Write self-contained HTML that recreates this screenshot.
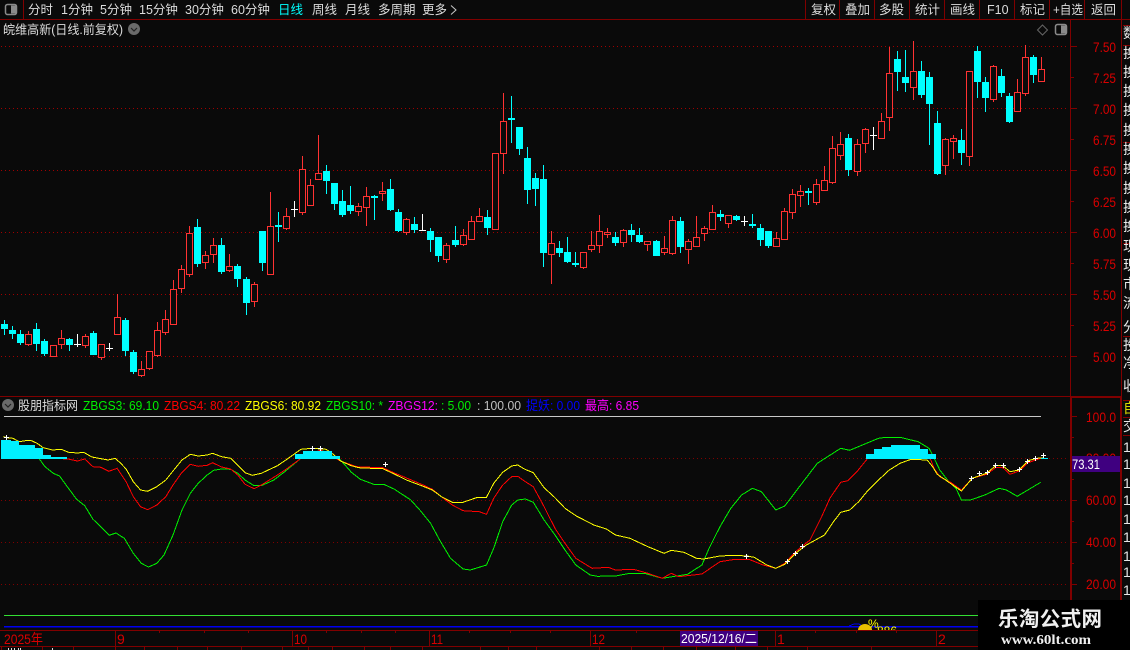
<!DOCTYPE html>
<html lang="zh"><head><meta charset="utf-8"><title>K线</title>
<style>
html,body{margin:0;padding:0;background:#0a0a0a;width:1130px;height:650px;overflow:hidden}
svg{display:block}
text{font-family:"Liberation Sans","WenQuanYi Zen Hei","Noto Sans CJK SC",sans-serif}
.t{font-size:12.5px;fill:#dcdcdc}
.ax{font-size:14px;fill:#d80000}
.ix{font-size:13px}
</style></head><body>
<svg id="s" width="1130" height="650" viewBox="0 0 1130 650" xmlns="http://www.w3.org/2000/svg">
<rect width="1130" height="650" fill="#0a0a0a"/>
<g id="grid" shape-rendering="crispEdges"></g>
<g id="candles" shape-rendering="crispEdges"></g>
<g id="ind"></g>

<!-- toolbar -->
<g shape-rendering="crispEdges" stroke="#800000" stroke-width="1">
<path d="M0 19.5H1130M23.5 0V19M805.5 0V19M839.5 0V19M874.5 0V19M909.5 0V19M944.5 0V19M979.5 0V19M1014.5 0V19M1049.5 0V19M1084.5 0V19M1121.5 0V19"/>
</g>
<rect x="5.5" y="4.5" width="11" height="10" rx="2" fill="none" stroke="#8a8a8a" stroke-width="1.5"/><rect x="11" y="5.5" width="5" height="8" fill="#8a8a8a"/>
<g class="t">
<text class="t" x="28" y="14">分时</text>
<text class="t" x="61" y="14">1分钟</text>
<text class="t" x="100" y="14">5分钟</text>
<text class="t" x="139" y="14">15分钟</text>
<text class="t" x="185" y="14">30分钟</text>
<text class="t" x="231" y="14">60分钟</text>
<text class="t" x="278" y="14" style="fill:#00ffff">日线</text>
<text class="t" x="312" y="14">周线</text>
<text class="t" x="345" y="14">月线</text>
<text class="t" x="378" y="14">多周期</text>
<text class="t" x="422" y="14">更多</text>
<path d="M451 5.5l5 4.5l-5 4.5" fill="none" stroke="#c8c8c8"/>
<text class="t" x="811" y="14">复权</text>
<text class="t" x="845" y="14">叠加</text>
<text class="t" x="879" y="14">多股</text>
<text class="t" x="915" y="14">统计</text>
<text class="t" x="950" y="14">画线</text>
<text class="t" x="987" y="14">F10</text>
<text class="t" x="1020" y="14">标记</text>
<text class="t" x="1053" y="14" textLength="30" lengthAdjust="spacingAndGlyphs">+自选</text>
<text class="t" x="1091" y="14">返回</text>
</g>

<!-- title row -->
<text class="t" x="3" y="34" textLength="120" lengthAdjust="spacingAndGlyphs">皖维高新(日线.前复权)</text>
<circle cx="134" cy="29" r="6" fill="#6a6a6a"/><path d="M131 28l3 3l3-3" fill="none" stroke="#222" stroke-width="1.2"/>
<path d="M1042.5 25l5 5l-5 5l-5-5z" fill="none" stroke="#666"/>
<rect x="1055.5" y="24.5" width="11" height="10" rx="2" fill="none" stroke="#8a8a8a" stroke-width="1.5"/><rect x="1061" y="25.5" width="5" height="8" fill="#8a8a8a"/>

<!-- axes -->
<g id="axes" shape-rendering="crispEdges"></g>
<g id="labels"></g>
<rect x="1072" y="456" width="48" height="16" fill="#3f0080"/>
<text x="1072" y="469" font-size="14" fill="#fff" textLength="28" lengthAdjust="spacingAndGlyphs">73.31</text>

<!-- indicator title -->
<circle cx="8" cy="405" r="6" fill="#6a6a6a"/><path d="M5 404l3 3l3-3" fill="none" stroke="#222" stroke-width="1.2"/>
<text x="18" y="410" font-size="12.5" fill="#dcdcdc" textLength="60" lengthAdjust="spacingAndGlyphs">股朋指标网</text>
<g class="ix">
<text class="ix" x="83" y="410" fill="#00f000" textLength="76" lengthAdjust="spacingAndGlyphs">ZBGS3: 69.10</text>
<text class="ix" x="164" y="410" fill="#ff0000" textLength="76" lengthAdjust="spacingAndGlyphs">ZBGS4: 80.22</text>
<text class="ix" x="245" y="410" fill="#ffff00" textLength="76" lengthAdjust="spacingAndGlyphs">ZBGS6: 80.92</text>
<text class="ix" x="326" y="410" fill="#00f000" textLength="57" lengthAdjust="spacingAndGlyphs">ZBGS10: *</text>
<text class="ix" x="388" y="410" fill="#ff00ff" textLength="50" lengthAdjust="spacingAndGlyphs">ZBGS12:</text>
<text class="ix" x="441" y="410" fill="#00f000" textLength="30" lengthAdjust="spacingAndGlyphs">: 5.00</text>
<text class="ix" x="477" y="410" fill="#c0c0c0" textLength="44" lengthAdjust="spacingAndGlyphs">: 100.00</text>
<text class="ix" x="526" y="410" fill="#0000ff" textLength="54" lengthAdjust="spacingAndGlyphs">捉妖: 0.00</text>
<text class="ix" x="585" y="410" fill="#ff00ff" textLength="54" lengthAdjust="spacingAndGlyphs">最高: 6.85</text>
</g>

<!-- lower band -->
<g shape-rendering="crispEdges">
<rect x="4" y="615" width="1126" height="1" fill="#33e033"/>
<rect x="4" y="626" width="1126" height="1.5" fill="#0000f0"/>
<path d="M849 626l5-2h5l3 2" fill="none" stroke="#0000f0"/>
</g>
<path d="M858 630a7 6 0 0 1 14 0z" fill="#e8c000"/>
<text x="868" y="628" font-size="12" fill="#ffff00">%</text>
<text x="877" y="635" font-size="12" fill="#ffff00">886</text>
<rect x="0" y="630" width="1130" height="16" fill="#0a0a0a"/>

<!-- time axis -->
<g id="time" shape-rendering="crispEdges"></g>
<g font-size="14" fill="#d80000">
<text x="4" y="644" textLength="39" lengthAdjust="spacingAndGlyphs">2025年</text>
<text x="117" y="644">9</text>
<text x="294" y="644" textLength="13" lengthAdjust="spacingAndGlyphs">10</text>
<text x="431" y="644" textLength="12" lengthAdjust="spacingAndGlyphs">11</text>
<text x="592" y="644" textLength="13" lengthAdjust="spacingAndGlyphs">12</text>
<text x="777" y="644">1</text>
<text x="938" y="644">2</text>
</g>
<rect x="680" y="631" width="78" height="15" fill="#3f0080"/>
<text x="681" y="643" font-size="13" fill="#fff" textLength="76" lengthAdjust="spacingAndGlyphs">2025/12/16/二</text>

<!-- right column clipped labels -->
<svg x="1123" y="20" width="7" height="630" viewBox="1123 20 7 630">
<g font-size="14" fill="#e8e8e8" id="rc"></g>
</svg>

<!-- logo -->
<rect x="978" y="600" width="152" height="50" fill="#000"/>
<text x="998" y="626" font-size="20.5" font-weight="700" fill="#f0f0f0" textLength="104" lengthAdjust="spacing">乐淘公式网</text>
<text x="1001" y="644" font-size="14" font-weight="700" fill="#f0f0f0" style="font-family:'Liberation Serif',serif" textLength="90" lengthAdjust="spacingAndGlyphs">www.60lt.com</text>
</svg>
<script>
var NS="http://www.w3.org/2000/svg";
function el(p,n,a){var e=document.createElementNS(NS,n);for(var k in a)e.setAttribute(k,a[k]);document.getElementById(p).appendChild(e);return e}
function tx(p,x,y,s,a){var e=el(p,"text",Object.assign({x:x,y:y},a||{}));e.textContent=s;return e}

/* grid */
[46,108,170,232,294,356].forEach(function(y){el("grid","path",{d:"M1 "+(y+.5)+"H1069",stroke:"#a00000","stroke-dasharray":"1 3",fill:"none"})});
[458,500,542,584].forEach(function(y){el("grid","path",{d:"M1 "+(y+.5)+"H1069",stroke:"#800000","stroke-dasharray":"1 3",fill:"none"})});
el("grid","rect",{x:4,y:416,width:1037,height:1,fill:"#c8c8c8"});

/* candles: wickTop, bodyTop, bodyBottom, wickBottom, type */
var C=[[320,324,329,335,'c'],[326,330,334,339,'c'],[330,334,343,345,'c'],[331,334,344,346,'r'],[323,329,344,351,'c'],[339,341,354,356,'c'],[345,345,356,357,'r'],[330,338,344,349,'r'],[338,339,345,351,'c'],[334,344,344,347,'w'],[334,336,345,348,'r'],[331,333,355,355,'c'],[344,344,357,360,'r'],[343,348,348,351,'w'],[294,317,334,334,'r'],[318,320,351,356,'c'],[350,352,372,374,'c'],[361,369,375,377,'r'],[351,351,368,370,'r'],[322,330,355,357,'r'],[310,319,332,335,'r'],[280,289,324,324,'r'],[265,269,288,293,'r'],[226,233,274,277,'r'],[219,227,264,267,'c'],[251,255,262,269,'r'],[238,245,254,263,'r'],[238,245,272,274,'c'],[254,266,270,272,'r'],[264,266,279,287,'c'],[277,279,303,315,'c'],[282,284,301,307,'r'],[231,231,263,271,'c'],[192,226,274,274,'r'],[212,225,227,242,'c'],[208,216,228,230,'r'],[201,209,209,217,'w'],[156,169,212,215,'r'],[179,185,205,206,'r'],[135,173,179,179,'r'],[165,171,181,194,'c'],[183,183,204,210,'c'],[190,201,215,217,'c'],[186,205,211,214,'c'],[203,206,211,216,'r'],[187,196,207,226,'r'],[195,196,197,220,'c'],[182,191,193,201,'r'],[179,189,210,211,'c'],[209,212,231,232,'c'],[218,219,232,235,'r'],[217,224,230,233,'c'],[214,230,230,231,'w'],[228,231,240,252,'c'],[237,237,256,262,'c'],[243,245,259,263,'r'],[226,240,245,247,'c'],[229,235,244,246,'r'],[216,221,239,239,'r'],[208,216,221,221,'r'],[210,217,228,235,'c'],[153,153,229,230,'r'],[93,121,153,174,'r'],[96,118,118,143,'c'],[127,127,149,155,'c'],[147,158,190,204,'c'],[173,178,189,206,'c'],[165,179,253,267,'c'],[231,243,254,284,'r'],[241,248,253,257,'c'],
[237,252,262,263,'c'],[252,263,264,267,'c'],[252,252,267,269,'r'],[231,245,249,252,'r'],[215,231,245,253,'r'],[228,232,234,238,'r'],[232,237,243,246,'c'],[229,230,242,247,'r'],[224,230,235,242,'c'],[228,235,242,243,'c'],[241,241,244,251,'r'],[240,241,256,256,'c'],[236,248,252,255,'r'],[216,220,253,255,'r'],[217,221,247,253,'c'],[239,241,249,264,'r'],[216,237,246,247,'r'],[226,228,233,241,'r'],[205,212,229,229,'r'],[210,214,217,221,'c'],[215,215,223,228,'r'],[215,216,220,221,'c'],[216,221,221,226,'w'],[214,224,226,228,'c'],[224,228,240,246,'c'],[231,231,246,248,'c'],[232,238,246,247,'r'],[208,211,239,239,'r'],[189,194,212,219,'r'],[185,191,195,207,'r'],[188,191,193,205,'c'],[179,184,202,205,'r'],[166,180,190,190,'r'],[136,148,182,184,'r'],[132,144,155,160,'r'],[134,138,170,176,'c'],[139,144,171,176,'r'],[128,129,143,153,'r'],[127,135,135,150,'w'],[113,121,138,138,'r'],[47,73,117,131,'r'],[51,59,72,91,'c'],[50,77,83,92,'c'],[41,71,87,100,'r'],[61,71,95,98,'c'],[72,77,104,145,'c'],[111,123,174,175,'c'],[138,139,165,175,'r'],[135,138,141,159,'r'],[129,140,153,165,'c'],[71,71,156,166,'r'],[46,51,82,98,'c'],[77,82,98,112,'c'],[65,66,99,102,'r'],[69,76,93,97,'c'],[93,96,122,123,'c'],[79,92,111,111,'r'],[45,57,93,96,'r'],[55,57,75,83,'c'],[57,69,81,82,'r']];
C.forEach(function(c,i){
  var x=Math.round(4.3+8.04*i),col=c[4]=='r'?'#ff3232':c[4]=='c'?'#00ffff':'#ffffff',xm=x+.5;
  if(c[4]=='r'){
    el("candles","path",{d:"M"+xm+" "+c[0]+"V"+c[1]+"M"+xm+" "+c[2]+"V"+c[3],stroke:col,fill:"none"});
    el("candles","rect",{x:x-3+.5,y:c[1]+.5,width:6,height:Math.max(c[2]-c[1],2),fill:"#0a0a0a",stroke:col});
  }else{
    el("candles","path",{d:"M"+xm+" "+c[0]+"V"+c[3],stroke:col,fill:"none"});
    if(c[4]=='w'||c[2]-c[1]<2){el("candles","rect",{x:x-3,y:c[1],width:7,height:c[4]=='w'?1:Math.max(c[2]-c[1],2),fill:col})}
    else el("candles","rect",{x:x-3,y:c[1],width:7,height:c[2]-c[1],fill:col});
  }
});

/* indicator lines */
function P(a,b){var s=[];a.forEach(function(p){s.push((p[0]/2.775).toFixed(1)+","+(395+p[1]/3).toFixed(1))});b.forEach(function(p){s.push((565+p[0]/2.775).toFixed(1)+","+(395+p[1]/3).toFixed(1))});return s.join(" ")}
var G=P([[108,190],[125,215],[148,235],[165,243],[190,280],[212,312],[235,332],[258,373],[280,395],[303,421],[322,414],[345,430],[370,475],[392,505],[412,516],[435,505],[455,480],[480,420],[505,345],[528,295],[550,265],[575,240],[593,226],[615,222],[640,223],[660,235],[680,255],[705,272],[725,272],[760,255],[790,230],[835,190],[890,165],[945,195],[975,232],[1000,253],[1037,268],[1065,268],[1095,283],[1140,315],[1165,345],[1195,385],[1220,435],[1250,490],[1285,522],[1305,525],[1350,510],[1370,460],[1395,380],[1420,330],[1437,315],[1458,312],[1480,322],[1510,375],[1540,420],[1568,465]],
[[30,510],[70,540],[90,544],[140,543],[180,535],[220,535],[270,550],[340,538],[380,510],[400,460],[430,395],[460,340],[490,300],[520,280],[545,290],[585,345],[610,333],[640,290],[700,205],[765,160],[790,166],[870,130],[890,127],[930,127],[980,140],[1010,160],[1020,180],[1040,225],[1065,260],[1085,280],[1100,315],[1125,315],[1165,300],[1205,280],[1225,285],[1255,304],[1320,262]]);
var R=P([[150,190],[188,192],[215,198],[235,192],[258,215],[280,217],[302,229],[325,220],[350,260],[370,305],[390,335],[410,344],[435,330],[460,305],[480,270],[505,232],[528,208],[550,214],[575,211],[590,203],[615,216],[640,222],[660,240],[680,268],[705,281],[725,270],[770,240],[800,218],[835,190],[890,165],[945,198],[990,215],[1030,217],[1060,217],[1090,232],[1130,250],[1170,268],[1200,283],[1225,305],[1255,330],[1285,347],[1330,350],[1350,358],[1370,310],[1395,270],[1420,245],[1437,244],[1455,258],[1480,275],[1510,335],[1540,400],[1568,445]],
[[30,490],[75,520],[120,517],[140,525],[190,523],[230,535],[270,550],[295,535],[315,545],[380,537],[430,500],[465,494],[510,493],[550,510],[585,520],[610,505],[640,470],[680,435],[710,370],[735,310],[765,262],[785,257],[810,230],[840,190],[1000,170],[1015,195],[1025,222],[1040,245],[1070,262],[1100,285],[1130,250],[1170,238],[1195,218],[1215,218],[1235,238],[1260,228],[1285,203],[1320,190]]);
var Y=P([[10,125],[20,128],[36,130],[53,140],[70,137],[85,136],[103,145],[120,158],[145,165],[170,163],[190,172],[215,174],[232,172],[255,186],[280,191],[300,195],[320,190],[335,205],[350,222],[370,260],[390,285],[410,289],[435,275],[460,255],[480,228],[505,195],[528,178],[550,183],[575,180],[590,175],[615,185],[640,190],[655,205],[680,233],[700,241],[725,235],[770,212],[800,190],[835,163],[865,160],[905,163],[925,178],[945,198],[975,212],[995,218],[1030,220],[1060,220],[1090,235],[1130,256],[1170,272],[1200,285],[1225,305],[1255,322],[1285,322],[1325,307],[1350,307],[1370,265],[1395,232],[1420,213],[1437,210],[1455,222],[1480,233],[1510,278],[1540,308]],
[[0,340],[30,362],[80,390],[115,402],[140,420],[180,430],[230,455],[275,475],[295,466],[330,472],[365,490],[385,492],[430,483],[470,481],[505,483],[525,487],[560,510],[585,520],[610,508],[640,475],[670,450],[720,420],[745,380],[765,352],[790,345],[815,320],[840,287],[870,255],[900,225],[930,205],[960,193],[1005,195],[1020,215],[1033,238],[1060,258],[1100,288],[1130,250],[1170,235],[1195,212],[1215,212],[1235,230],[1260,225],[1285,197],[1310,190],[1325,188]]);
[[G,'#00f000'],[R,'#ff0000'],[Y,'#ffff00']].forEach(function(l){el("ind","polyline",{points:l[0],fill:"none",stroke:l[1],"stroke-width":1,"shape-rendering":"crispEdges"})});
/* cyan histogram */
function bars(a,off){a.forEach(function(b){var x0=off+b[0]/2.775,x1=off+b[1]/2.775,y=395+b[2]/3;el("ind","rect",{x:Math.round(x0),y:Math.round(y),width:Math.round(x1)-Math.round(x0),height:459-Math.round(y),fill:"#00f0ff","shape-rendering":"crispEdges"})})}
bars([[3,30,135],[30,53,139],[53,97,150],[97,120,158],[120,142,180],[142,150,187],[150,186,185],[819,841,177],[841,865,167],[865,921,167],[921,944,183]],0);
bars([[835,858,177],[858,880,163],[880,905,157],[905,945,151],[945,985,150],[985,1007,162],[1007,1030,176]],565);
el("ind","rect",{x:1041,y:458,width:7,height:1,fill:"#00f0ff","shape-rendering":"crispEdges"});
/* star marks */
var st=[[17,126],[865,159],[887,159],[1067,207]].map(function(p){return[p[0]/2.775,395+p[1]/3]}).concat([[503,482],[615,497],[637,474],[659,453],[1128,248],[1150,234],[1172,231],[1194,209],[1216,209],[1261,222],[1283,197],[1305,188],[1327,179]].map(function(p){return[565+p[0]/2.775,395+p[1]/3]}));
st.forEach(function(p){var x=Math.round(p[0])+.5,y=Math.round(p[1])+.5;el("ind","path",{d:"M"+(x-2.5)+" "+y+"h5M"+x+" "+(y-2.5)+"v5",stroke:"#fff","stroke-width":1,fill:"none","shape-rendering":"crispEdges"})});

/* axes */
var A="#800000";
el("axes","rect",{x:1070,y:20,width:1,height:376,fill:A});
el("axes","rect",{x:1121,y:20,width:1,height:376,fill:A});
el("axes","rect",{x:1070,y:396,width:2,height:254,fill:A});
el("axes","rect",{x:1120,y:396,width:2,height:254,fill:A});
el("axes","rect",{x:0,y:396,width:1122,height:1,fill:A});
el("axes","rect",{x:1071,y:396,width:51,height:2,fill:A});
[46,77,108,139,170,201,232,263,294,325,356].forEach(function(y,i){el("axes","rect",{x:1071,y:y,width:i%2?3:6,height:1,fill:A})});
[416,437,458,479,500,521,542,563,584].forEach(function(y,i){el("axes","rect",{x:1071,y:y,width:i%2?3:6,height:1,fill:A})});
[[7.50,47],[7.25,78],[7.00,109],[6.75,140],[6.50,171],[6.25,202],[6.00,233],[5.75,264],[5.50,295],[5.25,326],[5.00,357]].forEach(function(a){
 tx("labels",1093,a[1]+5,a[0].toFixed(2),{class:"ax",textLength:23,lengthAdjust:"spacingAndGlyphs"})});
[["100.0",417],["80.00",458],["60.00",500],["40.00",542],["20.00",584]].forEach(function(a){
 tx("labels",1086,a[1]+5,a[0],{class:"ax",textLength:30,lengthAdjust:"spacingAndGlyphs"})});

/* time axis */
el("time","rect",{x:0,y:630,width:1130,height:1,fill:A});
el("time","rect",{x:0,y:646,width:1130,height:1,fill:A});
[115,292,429,590,775,936].forEach(function(x){el("time","rect",{x:x,y:630,width:1,height:16,fill:A})});
[159,204,248,326,361,395,469,510,550,636,815,856,896].forEach(function(x){el("time","rect",{x:x,y:631,width:1,height:2,fill:A})});
[1,42,73,115,144,177,207,241,282,308,332,364,390,422,480,508,536,599,631,663,696,735,767,807,871].forEach(function(x){el("time","rect",{x:x,y:647,width:1,height:3,fill:A})});
[8,11,14,18,20,52].forEach(function(x){el("time","rect",{x:x,y:648,width:1,height:2,fill:"#ddd"})});

/* right column */
[[1123,25],[1123,45],[1123,142],[1123,243],[1123,336],[1123,400],[1123,417],[1123,435]].forEach(function(p){el("rc","rect",{x:p[0],y:p[1],width:7,height:1,fill:A})});
var rows=[[38,"数"],[58,"换"],[77,"换"],[96,"换"],[115,"换"],[135,"换"],[154,"换"],[173,"换"],[193,"换"],[212,"换"],[231,"换"],[251,"现"],[270,"现"],[289,"市"],[308,"流"],[332,"分"],[350,"投"],[368,"净"],[391,"收"],[431,"交"]];
rows.forEach(function(r){tx("rc",1123,r[0],r[1],{"font-size":14,fill:"#e8e8e8"})});
tx("rc",1123,413,"自",{"font-size":14,fill:"#d8d800"});
[452,469,488,505,524,542,561,577,595].forEach(function(y){tx("rc",1123,y,"1",{"font-size":14,fill:"#e8e8e8"})});
</script>
</body></html>
